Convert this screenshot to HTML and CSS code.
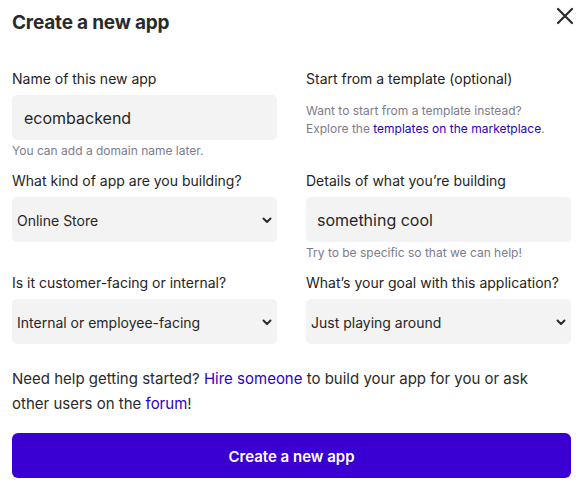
FILE: index.html
```html
<!DOCTYPE html>
<html>
<head>
<meta charset="utf-8">
<link rel="stylesheet" href="styles.css">
</head>
<body>
<div class="modal">
  <div class="header">
    <h1 class="title">Create a new app</h1>
    <button class="close" aria-label="Close">
      <svg width="18" height="18" viewBox="0 0 18 18"><path d="M2 2 L16 16 M16 2 L2 16" stroke="#2b2b2b" stroke-width="2.2" stroke-linecap="round"/></svg>
    </button>
  </div>
  <div class="grid">
    <div class="field">
      <div class="label">Name of this new app</div>
      <div class="input">ecombackend</div>
      <div class="help">You can add a domain name later.</div>
    </div>
    <div class="field">
      <div class="label">Start from a template (optional)</div>
      <div class="help help-top">Want to start from a template instead?<br>Explore the <a class="link" href="#">templates on the marketplace</a>.</div>
    </div>
    <div class="field">
      <div class="label">What kind of app are you building?</div>
      <div class="select"><span>Online Store</span>
        <svg class="chev" width="10" height="7" viewBox="0 0 10 7"><path d="M1.5 1.5 L5 5 L8.5 1.5" fill="none" stroke="#2b2b2b" stroke-width="2" stroke-linecap="round" stroke-linejoin="round"/></svg>
      </div>
    </div>
    <div class="field">
      <div class="label">Details of what you’re building</div>
      <div class="input input-r">something cool</div>
      <div class="help">Try to be specific so that we can help!</div>
    </div>
    <div class="field">
      <div class="label">Is it customer-facing or internal?</div>
      <div class="select"><span>Internal or employee-facing</span>
        <svg class="chev" width="10" height="7" viewBox="0 0 10 7"><path d="M1.5 1.5 L5 5 L8.5 1.5" fill="none" stroke="#2b2b2b" stroke-width="2" stroke-linecap="round" stroke-linejoin="round"/></svg>
      </div>
    </div>
    <div class="field">
      <div class="label">What’s your goal with this application?</div>
      <div class="select select-r"><span>Just playing around</span>
        <svg class="chev" width="10" height="7" viewBox="0 0 10 7"><path d="M1.5 1.5 L5 5 L8.5 1.5" fill="none" stroke="#2b2b2b" stroke-width="2" stroke-linecap="round" stroke-linejoin="round"/></svg>
      </div>
    </div>
  </div>
  <p class="note">Need help getting started? <a class="link" href="#">Hire someone</a> to build your app for you or ask other users on the <a class="link" href="#">forum</a>!</p>
  <button class="submit">Create a new app</button>
</div>
</body>
</html>
```
FILE: styles.css
```css
* { box-sizing: border-box; }
html, body { margin: 0; padding: 0; background: #fff; }
body {
  font-family: Inter, "Noto Sans", "Liberation Sans", sans-serif;
  color: #242424;
}
.modal {
  width: 579px;
  padding: 9px 8px 0 12px;
}
.header {
  display: flex;
  justify-content: space-between;
  align-items: flex-start;
  height: 60px;
}
.title {
  margin: 0;
  font-size: 19px;
  line-height: 28px;
  font-weight: 700;
  color: #2a2a2a;
  letter-spacing: -0.2px;
}
.close {
  border: 0;
  background: none;
  padding: 0;
  margin: -2px -3px 0 0;
  width: 18px;
  height: 18px;
  display: flex;
}
.grid {
  display: grid;
  grid-template-columns: 265px 265px;
  column-gap: 29px;
  row-gap: 11px;
}
.field { display: flex; flex-direction: column; }
.label {
  font-size: 14px;
  line-height: 20px;
  margin-bottom: 6px;
  color: #242424;
}
.input {
  height: 45px;
  background: #f3f3f3;
  border-radius: 5px;
  padding: 1px 12px 0;
  display: flex;
  align-items: center;
  font-size: 16px;
  color: #262626;
}
.input-r { padding-left: 11px; }
.help {
  font-size: 12px;
  line-height: 18px;
  margin-top: 2px;
  color: #7d7b8c;
}
.help-top { margin-top: 7px; }
.select {
  height: 45px;
  background: #f3f3f3;
  border-radius: 5px;
  padding: 2px 5px 0 5px;
  display: flex;
  align-items: center;
  justify-content: space-between;
  font-size: 14px;
  color: #262626;
}
.link { color: #2d00c2; text-decoration: none; }
.note {
  margin: 22px 0 0;
  max-width: 520px;
  font-size: 15px;
  line-height: 25px;
  color: #2a2a2a;
}
.submit {
  display: block;
  width: 559px;
  height: 45px;
  margin-top: 17px;
  border: 0;
  border-radius: 6px;
  background: #3a00d1;
  color: #fff;
  font-family: inherit;
  font-size: 15px;
  font-weight: 600;
  padding-top: 2px;
}
```
